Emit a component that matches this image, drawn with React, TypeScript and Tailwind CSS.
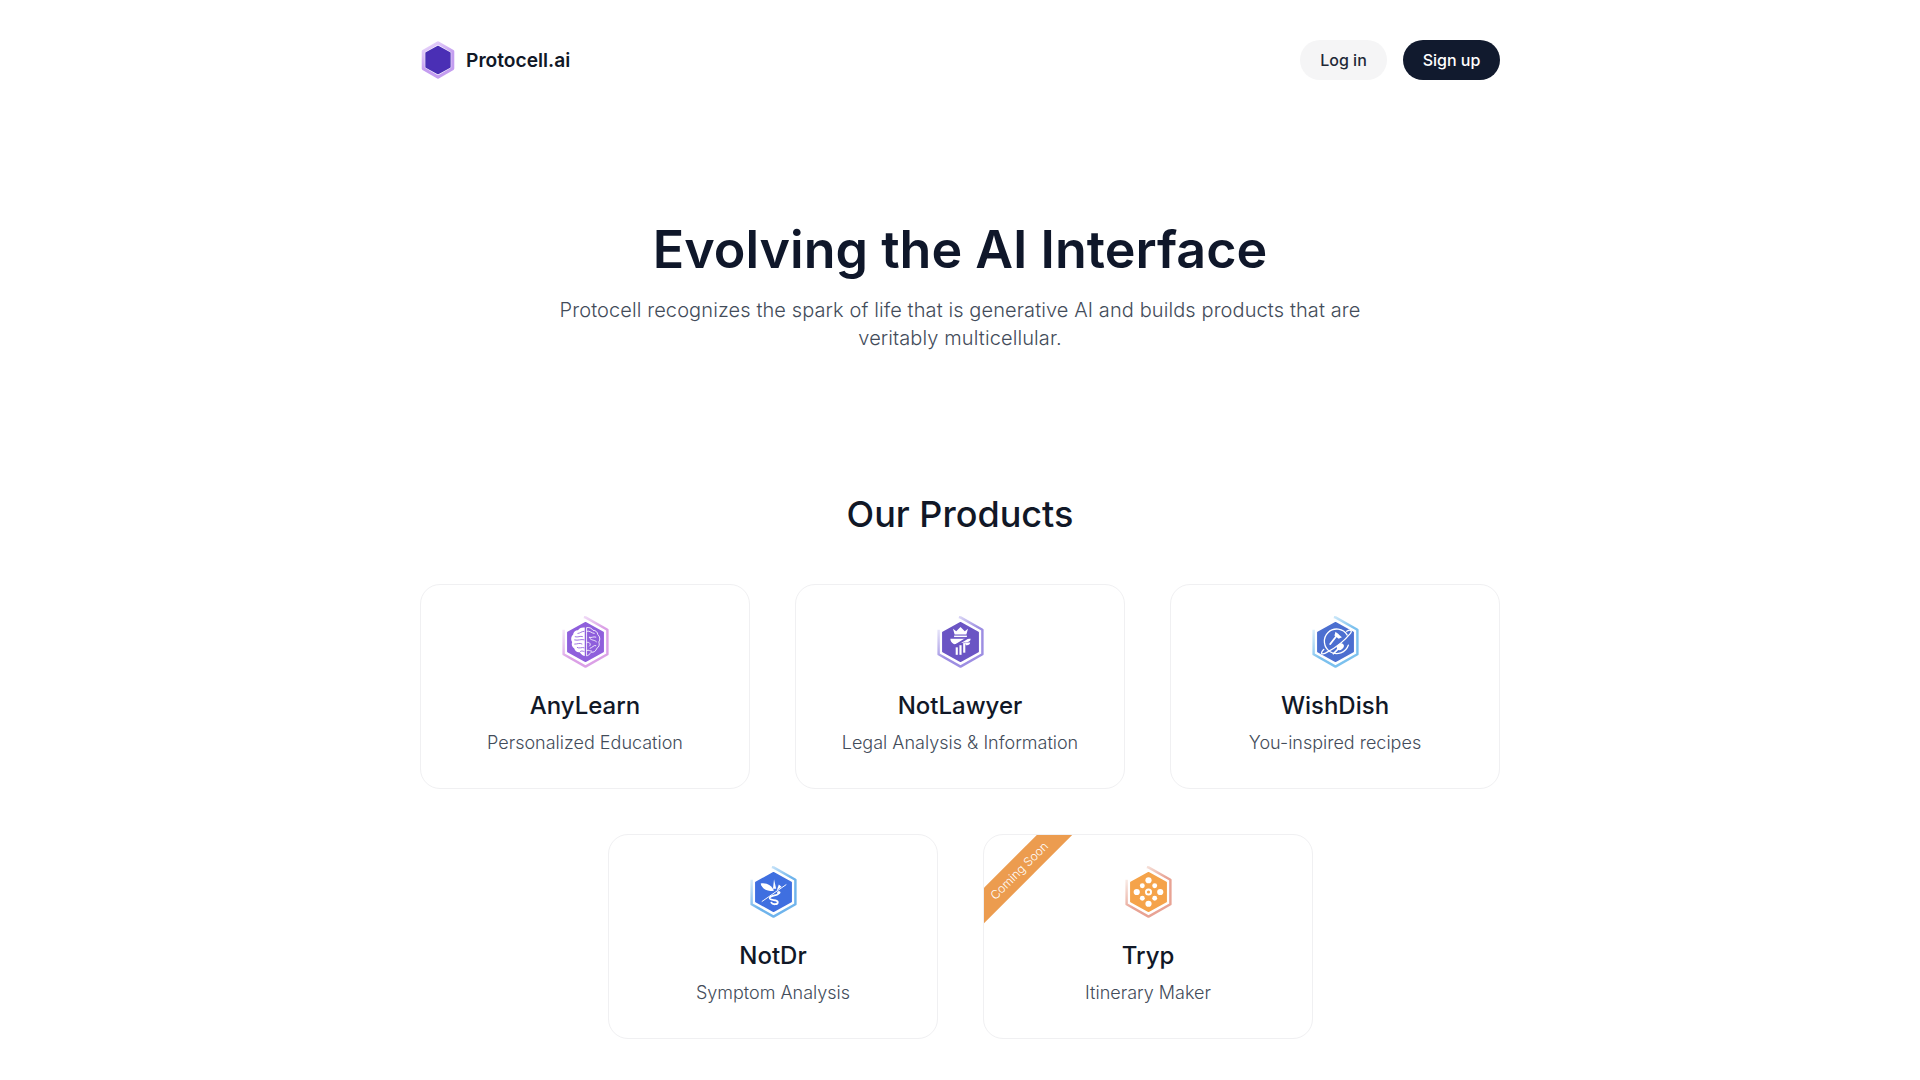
import React from 'react';

const HEX_RING = 'M20.5 0.6 L22 1 L42.5 12.5 L42.5 35.5 L22 47 L1.5 35.5 L1.5 12.5';
const HEX_INNER = '22,6 38.5,15 38.5,33 22,42 5.5,33 5.5,15';

const Hex: React.FC<{ id: string; fill: string; from: string; to: string; className: string; children?: React.ReactNode }> = ({ id, fill, from, to, className, children }) => (
  <svg viewBox="0 0 44 48" className={className}>
    <defs>
      <linearGradient id={id} x1="0" y1="0.2" x2="0.6" y2="0.95">
        <stop offset="0" stopColor={from} />
        <stop offset="0.6" stopColor={to} />
      </linearGradient>
    </defs>
    <path d={HEX_RING} fill="none" stroke={`url(#${id})`} strokeWidth="2.3" strokeLinejoin="round" />
    <polygon points={HEX_INNER} fill={fill} stroke={fill} strokeWidth="1.5" strokeLinejoin="round" />
    {children}
  </svg>
);

const Logo = () => (
  <svg viewBox="0 0 44 48" className="h-[40px] w-[36px]">
    <defs>
      <linearGradient id="logo" x1="0.1" y1="0" x2="0.6" y2="1">
        <stop offset="0" stopColor="#ead9fc" />
        <stop offset="0.6" stopColor="#c49df0" />
      </linearGradient>
    </defs>
    <polygon points="22,3 40,13.5 40,34.5 22,45 4,34.5 4,13.5" fill="#fff" stroke="url(#logo)" strokeWidth="3.8" strokeLinejoin="round" />
    <polygon points="22,7.5 36.5,15.5 36.5,32.5 22,40.5 7.5,32.5 7.5,15.5" fill="#4a2fb5" stroke="#4a2fb5" strokeWidth="2" strokeLinejoin="round" />
  </svg>
);

const Brain = () => (
  <g>
    <path d="M21.3 10.5 C18 10 16 11.5 15 13 C12.5 13 10.5 15 10.5 17 C8.5 18.5 8 22 9.5 24 C8.5 26.5 9.5 29 11.5 30 C12 32.5 14.5 34 16.5 33.5 C18 35.5 20 37 21.3 37 Z" fill="#fff" />
    <path d="M21 14 C18 14 17 16 14.5 16 M12 19 C15 20 17 18 19.5 19 M21 22 C18 21 15 23 11.5 22 M11.5 26 C15 26 16 24.5 19 26 M21 29.5 C19 28.5 16 30.5 14 29 M17 33 C18 32 19.5 32.5 21 33" fill="none" stroke="#8f5fdc" strokeWidth="0.8" />
    <path d="M23 10.5 C26 10 28 11.5 29 13 C31.5 13 33.5 15 33.5 17 C35.5 18.5 36 22 34.5 24 C35.5 26.5 34.5 29 32.5 30 C32 32.5 29.5 34 27.5 33.5 C26 35.5 24 37 23 37 Z M23 14 C26 13 28 16 30.5 16 M32 19.5 C29 18.5 28 20.5 25.5 19.5 C27 23 30 21.5 32.5 24 M23 24.5 C26 23.5 27.5 26.5 25.5 28 M32 27.5 C29.5 26.5 28.5 29.5 26 30 M23 32 C25 31 27 33 28 32.5" fill="none" stroke="#fff" strokeWidth="0.8" />
  </g>
);

const Column = () => (
  <g fill="#fff">
    <polygon points="15,11.5 18,14 22,10 26,14 29,11.5 27.5,17 16.5,17" />
    <rect x="16" y="18" width="12" height="1.4" />
    <path d="M12.5 21 H31.5 C31.5 23 30 24 27 24.3 L16 26 C13.5 25 12.5 23 12.5 21 Z" />
    <rect x="24.5" y="25" width="2" height="9" />
    <rect x="21" y="27" width="2" height="9" />
    <rect x="17.5" y="29" width="2" height="7" />
    <path d="M26 24.5 H31 C31 26.5 29 27.5 27 27 Z" />
    <path d="M33 18.5 L11 32 L10 30.5 L32 17 Z" fill="#6b55c4" />
  </g>
);

const Planet = () => (
  <g fill="none" stroke="#fff" strokeWidth="1.2" strokeLinecap="round">
    <path d="M33 17.5 A11.5 11.5 0 1 0 34 27" />
    <path d="M11 31 C7 35 9 37 15 33 C23 29 31 22 36 16 C38 13 36 12 32.5 14" />
    <path d="M17 26 L24 17" strokeWidth="1.6" />
    <path d="M22 14.5 L28 19.5 L25 21 L21 18 Z" fill="#fff" stroke="none" />
    <ellipse cx="26.5" cy="28.5" rx="3.6" ry="2.7" fill="#fff" stroke="none" transform="rotate(-40 26.5 28.5)" />
    <path d="M20 35 L25 30" strokeWidth="1.6" />
  </g>
);

const Caduceus = () => (
  <g>
    <path d="M10 16 C16 15 20 18 22.5 22.5 C17 24 11.5 22 10 16 Z" fill="#fff" />
    <path d="M22.5 12 L24.5 21 L21.5 21 Z M27 17 L29.5 19 L25 22.5 Z" fill="#fff" />
    <path d="M34 17 L11 33" stroke="#fff" strokeWidth="0.9" />
    <path d="M26.5 25 C27.5 27.5 18 27 18.5 30 C19 32.5 26 30.5 26 33.5 C26 36 21 36 20 34" fill="none" stroke="#fff" strokeWidth="1.7" strokeLinecap="round" />
    <circle cx="27" cy="24.5" r="1.5" fill="#fff" />
  </g>
);

const Dots = () => (
  <g fill="#fff">
    <circle cx="22" cy="24" r="3.3" />
    <circle cx="22" cy="24" r="1.5" fill="#f5a34a" />
    <circle cx="22" cy="13" r="2.9" />
    <circle cx="22" cy="35" r="2.9" />
    <circle cx="11" cy="24" r="2.9" />
    <circle cx="33" cy="24" r="2.9" />
    <circle cx="16.2" cy="18.2" r="2.3" />
    <circle cx="27.8" cy="18.2" r="2.3" />
    <circle cx="16.2" cy="29.8" r="2.3" />
    <circle cx="27.8" cy="29.8" r="2.3" />
  </g>
);

const ProductCard: React.FC<{ title: string; text: string; icon: React.ReactNode; soon?: boolean }> = ({ title, text, icon, soon }) => (
  <div className="relative flex h-[205px] w-[330px] flex-col items-center overflow-hidden rounded-[20px] border border-[#f0f0f2] bg-white pt-[31px]">
    {soon && (
      <div className="absolute left-[-35px] top-[23px] flex h-[25px] w-[140px] -rotate-45 items-center justify-center bg-[#ec9c4f] text-xs font-light text-white">
        Coming Soon
      </div>
    )}
    {icon}
    <h3 className="mt-[22px] text-2xl font-medium text-[#111827]">{title}</h3>
    <p className="mt-[7px] text-lg font-light leading-7 text-[#434c5a]">{text}</p>
  </div>
);

export default function App() {
  return (
    <div className="min-h-screen bg-white font-['Inter',sans-serif]">
      <div className="mx-auto w-[1080px]">
        <nav className="flex items-center justify-between pt-10">
          <div className="flex items-center gap-[10px]">
            <Logo />
            <span className="text-[19.2px] font-semibold text-[#111827]">Protocell.ai</span>
          </div>
          <div className="flex items-center gap-4">
            <button className="h-10 w-[87px] rounded-full bg-[#f5f5f6] text-base font-medium text-[#1f2937]">Log in</button>
            <button className="h-10 w-[97px] rounded-full bg-[#111a2e] text-base font-medium text-white">Sign up</button>
          </div>
        </nav>

        <section className="pt-[134px] text-center">
          <h1 className="text-[52px] font-semibold leading-[72px] text-[#0f172a]">Evolving the AI Interface</h1>
          <p className="mx-auto mt-[10px] w-[820px] text-xl font-light leading-7 tracking-[0.1px] text-[#434c5a]">
            Protocell recognizes the spark of life that is generative AI and builds products that are veritably multicellular.
          </p>
        </section>

        <section className="pt-[142px]">
          <h2 className="text-center text-4xl font-medium leading-10 text-[#111827]">Our Products</h2>
          <div className="mt-[50px] flex justify-between">
            <ProductCard title="AnyLearn" text="Personalized Education" icon={<Hex id="any" fill="#8f5fdc" from="#f6ecfb" to="#dba0e6" className="h-[52px] w-[47px]"><Brain /></Hex>} />
            <ProductCard title="NotLawyer" text="Legal Analysis & Information" icon={<Hex id="law" fill="#6b55c4" from="#ecebfb" to="#9d8ee2" className="h-[52px] w-[47px]"><Column /></Hex>} />
            <ProductCard title="WishDish" text="You-inspired recipes" icon={<Hex id="wish" fill="#4c6fd0" from="#e3f3fc" to="#7cc1ee" className="h-[52px] w-[47px]"><Planet /></Hex>} />
          </div>
          <div className="mt-[45px] flex justify-center gap-[45px] pb-8 pl-[1px]">
            <ProductCard title="NotDr" text="Symptom Analysis" icon={<Hex id="dr" fill="#3f6fe0" from="#dff0fc" to="#6fb4ec" className="h-[52px] w-[47px]"><Caduceus /></Hex>} />
            <ProductCard soon title="Tryp" text="Itinerary Maker" icon={<Hex id="tryp" fill="#f5a34a" from="#faf1ec" to="#e8a394" className="h-[52px] w-[47px]"><Dots /></Hex>} />
          </div>
        </section>
      </div>
    </div>
  );
}
